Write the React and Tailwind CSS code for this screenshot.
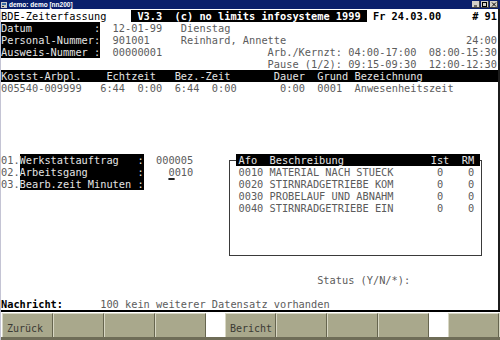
import React from 'react'

const mono = "font-['DejaVu_Sans_Mono',monospace]"
const row = 'h-[12px] leading-[12px] whitespace-pre'
const inv = 'bg-black text-[#e4e4e4]'

// parts: [col, text, className]
function Line({ parts = [], className = '' }) {
  const out = []
  let pos = 0
  parts.forEach(([col, text, cls], i) => {
    if (col > pos) out.push(' '.repeat(col - pos))
    out.push(
      <span key={i} className={cls}>
        {text}
      </span>
    )
    pos = col + text.length
  })
  return <div className={`${row} ${className}`}>{out.length ? out : ' '}</div>
}

function TitleBar() {
  return (
    <div className="h-[9px] bg-[#0a1f6c] flex items-center pl-[1px] pr-[2px]">
      <svg width="6" height="6" viewBox="0 0 6 6" className="mr-[2px]">
        <rect x="0" y="0" width="6" height="6" fill="#c8c8c8" />
        <rect x="1" y="1" width="4" height="2" fill="#3a6ea5" />
        <rect x="1" y="4" width="2" height="1" fill="#2a2a2a" />
      </svg>
      <span className="text-white text-[6.5px] leading-[9px] font-bold font-['Liberation_Sans',sans-serif]">
        demo: demo [nn200]
      </span>
      <div className="ml-auto flex gap-[1px]">
        {['min', 'max', 'close'].map((k) => (
          <div key={k} className="w-[8px] h-[7px] bg-[#d4d0c8] border-r border-b border-[#404040] flex items-center justify-center">
            <svg width="6" height="5" viewBox="0 0 6 5">
              {k === 'min' && <rect x="1" y="3.5" width="3" height="1" fill="#000" />}
              {k === 'max' && <rect x="0.5" y="0.5" width="4" height="4" fill="none" stroke="#000" strokeWidth="1" />}
              {k === 'close' && <path d="M1 0.5 L5 4.5 M5 0.5 L1 4.5" stroke="#000" strokeWidth="1" />}
            </svg>
          </div>
        ))}
      </div>
    </div>
  )
}

function FKey({ label }) {
  return (
    <div className="w-[51px] h-full shrink-0 bg-[#a9a88c] border-l border-t border-l-[#d8d7c4] border-t-[#d8d7c4] border-r border-r-[#66654f] flex items-end pl-[4px] pb-[3px] text-[10px] leading-[10px] text-[#3a3a34]">
      {label}
    </div>
  )
}

export default function App() {
  const tasks = [
    ['0010', 'MATERIAL NACH STUECK'],
    ['0020', 'STIRNRADGETRIEBE KOM'],
    ['0030', 'PROBELAUF UND ABNAHM'],
    ['0040', 'STIRNRADGETRIEBE EIN'],
  ]

  return (
    <div className={`w-[500px] h-[340px] bg-white overflow-hidden flex flex-col ${mono} text-[10.3px] text-[#5c5c5c]`}>
      <TitleBar />

      <div className="flex-1 flex flex-col border-l border-l-[#c4c4d4]">
        <div className="h-[301px] pt-[1px] border-r-2 border-r-[#1c1c1c] overflow-hidden">
          <Line
            parts={[
              [0, 'BDE-Zeiterfassung', 'text-black'],
              [21, ' V3.3  (c) no limits infosysteme 1999 ', 'bg-black text-white font-bold'],
              [60, 'Fr 24.03.00', 'text-black font-bold'],
              [76, '# 91', 'text-black font-bold'],
            ]}
          />
          <Line parts={[[0, 'Datum          :', inv], [18, '12-01-99'], [29, 'Dienstag']]} />
          <Line parts={[[0, 'Personal-Nummer:', inv], [18, '901001'], [29, 'Reinhard, Annette'], [75, '24:00']]} />
          <Line parts={[[0, 'Ausweis-Nummer :', inv], [18, '00000001'], [43, 'Arb./Kernzt: 04:00-17:00  08:00-15:30']]} />
          <Line parts={[[43, 'Pause (1/2): 09:15-09:30  12:00-12:30']]} />
          <Line
            className={inv}
            parts={[
              [0, 'Kostst-Arbpl.'],
              [17, 'Echtzeit'],
              [28, 'Bez.-Zeit'],
              [44, 'Dauer'],
              [51, 'Grund'],
              [57, 'Bezeichnung'],
            ]}
          />
          <Line
            parts={[
              [0, '005540-009999'],
              [16, '6:44'],
              [22, '0:00'],
              [28, '6:44'],
              [34, '0:00'],
              [45, '0:00'],
              [51, '0001'],
              [57, 'Anwesenheitszeit'],
            ]}
          />
          <div className="h-[60px]" />

          <div className="h-[108px] flex">
            <div className="w-[228px] shrink-0">
              <Line parts={[[0, '01.'], [3, 'Werkstattauftrag   :', inv], [25, '000005']]} />
              <div className={row}>
                {'02.'}
                <span className={inv}>Arbeitsgang        :</span>
                {'    '}
                <span className="underline decoration-[#222] decoration-[1.5px] underline-offset-[2px]">0</span>
                {'010'}
              </div>
              <Line parts={[[0, '03.'], [3, 'Bearb.zeit Minuten :', inv]]} />
            </div>

            <div className="w-[253px] shrink-0 flex flex-col">
              <div className="h-[12px] flex">
                <div className="w-[7px] h-[6px] mt-[6px] border-l border-t border-[#3a3a3a]" />
                <Line
                  className={`flex-1 pl-[2.5px] ${inv}`}
                  parts={[[0, 'Afo'], [5, 'Beschreibung'], [31, 'Ist'], [36, 'RM']]}
                />
                <div className="w-[2px] h-[6px] mt-[6px] border-r border-t border-[#3a3a3a]" />
              </div>
              <div className="h-[90px] border-l border-r border-b border-[#3a3a3a] pl-[8.5px]">
                {tasks.map(([nr, text]) => (
                  <Line key={nr} parts={[[0, nr], [5, text], [32, '0'], [37, '0']]} />
                ))}
              </div>
            </div>
          </div>

          <Line />
          <Line parts={[[51, 'Status (Y/N/*):']]} />
          <Line />
          <Line parts={[[0, 'Nachricht:', 'text-black font-bold'], [16, '100 kein weiterer Datensatz vorhanden']]} />
        </div>

        <div className="h-[2px] bg-black" />
        <div className="h-[1px]" />

        <div className="h-[24px] flex pl-[1px] overflow-hidden">
          <FKey label="Zurück" />
          <FKey label="" />
          <FKey label="" />
          <FKey label="" />
          <div className="w-[19px] shrink-0 bg-white" />
          <FKey label="Bericht" />
          <FKey label="" />
          <FKey label="" />
          <FKey label="" />
          <div className="w-[19px] shrink-0 bg-white" />
          <FKey label="" />
          <FKey label="" />
        </div>
        <div className="flex-1 bg-[#6f6d58]" />
      </div>
    </div>
  )
}
